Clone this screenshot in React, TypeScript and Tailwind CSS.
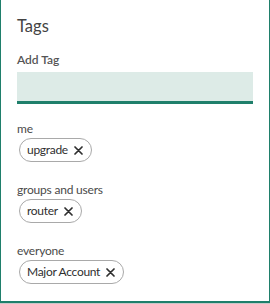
import { useState } from "react";

type Group = { label: string; tags: string[] };

const groups: Group[] = [
  { label: "me", tags: ["upgrade"] },
  { label: "groups and users", tags: ["router"] },
  { label: "everyone", tags: ["Major Account"] },
];

function Chip({ text }: { text: string }) {
  return (
    <span className="ml-[2px] inline-flex h-[24px] items-center gap-[6px] rounded-full border border-[#a9a9a9] pl-[7px] pr-[8px] text-[12px] tracking-[-0.3px] text-[#2f2f2f]">
      {text}
      <svg width="9" height="9" viewBox="0 0 9 9" className="shrink-0">
        <path d="M1 1 L8 8 M8 1 L1 8" stroke="#2f2f2f" strokeWidth="1.7" strokeLinecap="round" />
      </svg>
    </span>
  );
}

export default function App() {
  const [value, setValue] = useState("");

  return (
    <div className="h-[304px] w-[270px] bg-white font-['Lato',sans-serif] text-[#4a4a4a]">
      <div className="h-[303px] border-x border-b-2 border-[#1f7f6b] px-[16px] pt-[16px] shadow-[0_1px_0_#c8c8c8]">
        <h2 className="text-[16.5px] leading-[20px] text-[#444]">Tags</h2>
        <label className="mt-[16px] block text-[12px] font-semibold leading-[15px] text-[#555]">Add Tag</label>
        <input
          value={value}
          onChange={(e) => setValue(e.target.value)}
          className="mt-[5px] block h-[32px] w-[236px] border-b-[3px] border-[#1f7f6b] bg-[#ddebe7] px-2 text-[13px] outline-none"
        />
        <div className="mt-[17px] flex flex-col gap-[20px]">
          {groups.map((g) => (
            <div key={g.label}>
              <div className="text-[12px] leading-[15px] tracking-[-0.2px] text-[#4a4a4a]">{g.label}</div>
              <div className="mt-[2px] flex flex-wrap gap-2">
                {g.tags.map((t) => (
                  <Chip key={t} text={t} />
                ))}
              </div>
            </div>
          ))}
        </div>
      </div>
    </div>
  );
}
